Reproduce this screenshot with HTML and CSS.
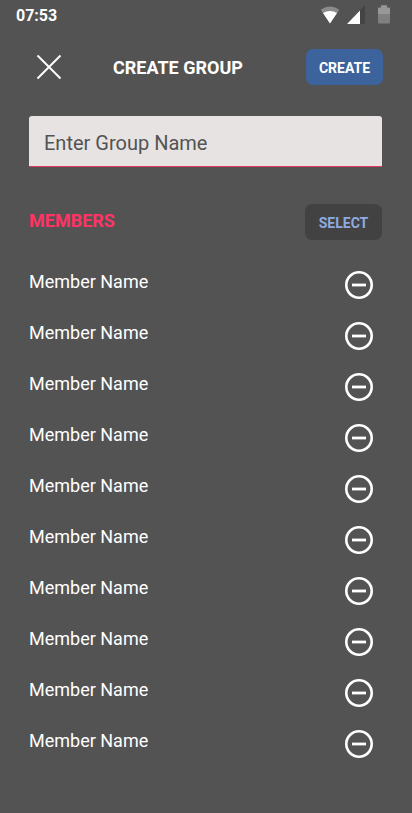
FILE: index.html
```html
<!DOCTYPE html>
<html lang="en">
<head>
<meta charset="utf-8">
<title>Create Group</title>
<link rel="stylesheet" href="styles.css">
</head>
<body>
<div class="statusbar">
  <span class="clock">07:53</span>
  <svg class="status-icons" width="70" height="20" viewBox="0 0 70 20">
    <path d="M0.7 4.7Q10 -1.8 19.3 4.7L10 18.2Z" fill="#8b8b8b"/>
    <path d="M3 8Q10 4 17 8L10 18.5Z" fill="#fff"/>
    <path d="M45 0V19H27Z" fill="#444"/>
    <path d="M40 5.5V19H27Z" fill="#fff"/>
    <path d="M58 3.5Q58 2.5 59 2.5H61V0.2H67V2.5H69Q70 2.5 70 3.5V9H58Z" fill="#979797"/>
    <path d="M58 9H70V17.5Q70 18.5 69 18.5H59Q58 18.5 58 17.5Z" fill="#808080"/>
  </svg>
</div>
<header class="appbar">
  <svg class="close" width="26" height="26" viewBox="0 0 26 26"><path d="M1.5 1.5L24.5 24.5M24.5 1.5L1.5 24.5" stroke="#fff" stroke-width="1.9"/></svg>
  <h1 class="title">CREATE GROUP</h1>
  <button class="btn btn-create">CREATE</button>
</header>
<main class="content">
  <input class="group-name" type="text" placeholder="Enter Group Name">
  <div class="section">
    <h2 class="section-title">MEMBERS</h2>
    <button class="btn btn-select">SELECT</button>
  </div>
  <svg class="defs" width="0" height="0"><symbol id="remove" viewBox="0 0 28 28"><circle cx="14" cy="14" r="12.7" fill="none" stroke="#fff" stroke-width="2.6"/><path d="M7 14H21" stroke="#fff" stroke-width="2.8"/></symbol></svg>
  <ul class="members">
    <li class="member"><span>Member Name</span><svg class="remove"><use href="#remove"/></svg></li>
    <li class="member"><span>Member Name</span><svg class="remove"><use href="#remove"/></svg></li>
    <li class="member"><span>Member Name</span><svg class="remove"><use href="#remove"/></svg></li>
    <li class="member"><span>Member Name</span><svg class="remove"><use href="#remove"/></svg></li>
    <li class="member"><span>Member Name</span><svg class="remove"><use href="#remove"/></svg></li>
    <li class="member"><span>Member Name</span><svg class="remove"><use href="#remove"/></svg></li>
    <li class="member"><span>Member Name</span><svg class="remove"><use href="#remove"/></svg></li>
    <li class="member"><span>Member Name</span><svg class="remove"><use href="#remove"/></svg></li>
    <li class="member"><span>Member Name</span><svg class="remove"><use href="#remove"/></svg></li>
    <li class="member"><span>Member Name</span><svg class="remove"><use href="#remove"/></svg></li>
  </ul>
</main>
</body>
</html>
```
FILE: styles.css
```css
* { box-sizing: border-box; }
body {
  margin: 0;
  height: 813px;
  overflow: hidden;
  background: #535353;
  color: #fff;
  font-family: Roboto, "Liberation Sans", sans-serif;
}
.statusbar {
  display: flex;
  justify-content: space-between;
  height: 32px;
  padding: 5px 22px 0 16px;
}
.clock { font-size: 16px; font-weight: 700; line-height: 21px; }
.appbar {
  display: flex;
  align-items: flex-start;
  height: 84px;
  padding: 17px 29px 0 36px;
}
.close { margin-top: 5px; }
.title { margin: 7px 0 0 51px; font-size: 18px; font-weight: 700; line-height: 24px; white-space: nowrap; }
.btn {
  width: 77px;
  height: 36px;
  padding: 2px 0 0;
  border: 0;
  border-radius: 7px;
  font: 700 14px/20px Roboto, "Liberation Sans", sans-serif;
}
.btn-create { margin-left: auto; background: #3c639c; color: #fff; }
.btn-select { background: #424242; color: #8eabe0; }
.content { padding: 0 30px 0 29px; }
.group-name {
  display: block;
  width: 100%;
  height: 51px;
  padding: 3px 15px 0;
  border: 0;
  border-bottom: 1px solid #e63563;
  border-radius: 3px 3px 0 0;
  outline: 0;
  background: #e7e3e2;
  font: 400 20px/26px Roboto, "Liberation Sans", sans-serif;
}
.group-name::placeholder { color: #535353; opacity: 1; }
.section { display: flex; justify-content: space-between; padding-top: 37px; height: 98px; }
.section-title { margin: 5px 0 0; color: #ff3366; font-size: 18px; font-weight: 700; line-height: 24px; }
.defs { position: absolute; }
.members { margin: 0; padding: 0; list-style: none; }
.member {
  display: flex;
  justify-content: space-between;
  height: 51px;
  padding: 5px 9px 0 0;
  font-size: 18px;
  line-height: 24px;
}
.remove { width: 28px; height: 28px; margin-top: 1px; }
```
